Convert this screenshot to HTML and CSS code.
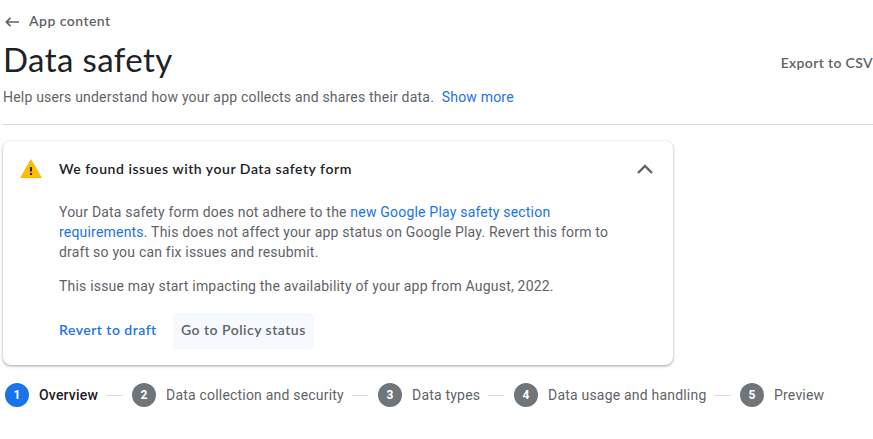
FILE: index.html
```html
<!DOCTYPE html>
<html lang="en">
<head>
<meta charset="utf-8">
<title>Data safety</title>
<link rel="stylesheet" href="styles.css">
</head>
<body>
<header class="page-header">
  <a class="back">
    <svg class="back-icon" width="14" height="10" viewBox="0 0 14 10"><path d="M14 5H1.400M5.500 .8L1.300 5l4.200 4.200" fill="none" stroke="#5f6368" stroke-width="1.700"/></svg>
    <span class="back-label">App content</span>
  </a>
  <div class="title-row">
    <h1 class="title">Data safety</h1>
    <span class="export">Export to CSV</span>
  </div>
  <p class="intro">Help users understand how your app collects and shares their data. <a class="link show-more">Show more</a></p>
</header>
<section class="card">
  <div class="card-head">
    <svg class="warning" width="22" height="19" viewBox="0 0 22 19"><path d="M0 19L11 0l11 19z" fill="#fbbc04"/><path d="M10 8h2v4.500h-2zM10 14h2v2h-2z" fill="#202124"/></svg>
    <h2 class="card-title">We found issues with your Data safety form</h2>
    <svg class="chevron" width="16" height="10" viewBox="0 0 16 10"><path d="M1 9l7-7 7 7" fill="none" stroke="#5f6368" stroke-width="2.300"/></svg>
  </div>
  <div class="card-body">
    <p class="text">Your Data safety form does not adhere to the <a class="link">new Google Play safety section<br>requirements</a>. This does not affect your app status on Google Play. Revert this form to<br>draft so you can fix issues and resubmit.</p>
    <p class="text">This issue may start impacting the availability of your app from August, 2022.</p>
    <div class="actions">
      <a class="action revert">Revert to draft</a>
      <a class="action policy">Go to Policy status</a>
    </div>
  </div>
</section>
<nav class="steps">
  <div class="step active"><span class="num">1</span><span class="name s1">Overview</span></div>
  <i class="line"></i>
  <div class="step"><span class="num">2</span><span class="name s2">Data collection and security</span></div>
  <i class="line"></i>
  <div class="step"><span class="num">3</span><span class="name s3">Data types</span></div>
  <i class="line"></i>
  <div class="step"><span class="num">4</span><span class="name s4">Data usage and handling</span></div>
  <i class="line"></i>
  <div class="step"><span class="num">5</span><span class="name s5">Preview</span></div>
</nav>
</body>
</html>
```
FILE: styles.css
```css
* { box-sizing: border-box; }
body {
  margin: 0;
  height: 439px;
  overflow: hidden;
  background: #fff;
  color: #5f6368;
  font: 400 14px/20px Roboto, sans-serif;
  letter-spacing: 0.2px;
}
h1, h2, p { margin: 0; }
svg { display: block; flex: none; }
.link { color: #1a73e8; }
.page-header {
  margin-left: 3px;
  height: 125px;
  padding-top: 11px;
  border-bottom: 1px solid #dadce0;
}
.back { display: flex; align-items: center; height: 20px; padding-left: 2px; }
.back-icon { margin-top: 2px; }
.back-label, .title, .export, .card-title, .action {
  font-family: Lato, sans-serif;
  font-size: 14px;
  white-space: nowrap;
}
.back-label { margin-left: 10px; font-weight: 600; letter-spacing: 0.45px; }
.title-row { display: flex; justify-content: space-between; height: 56px; }
.title {
  margin-top: 8px;
  font-size: 33px;
  font-weight: 400;
  line-height: 40px;
  letter-spacing: 0.4px;
  color: #202124;
}
.export { margin-top: 22px; font-weight: 600; letter-spacing: 0.35px; }
.intro { white-space: nowrap; }
.show-more { margin-left: 4px; }
.card {
  width: 670px;
  height: 224px;
  margin: 16px 0 0 3px;
  border-radius: 8px;
  box-shadow: 0 1px 2px rgba(60,64,67,.3), 0 1px 3px 1px rgba(60,64,67,.15);
}
.card-head { display: flex; align-items: center; height: 55px; padding: 0 20px 0 17px; }
.card-title { margin-left: 17px; font-weight: 600; letter-spacing: 0.54px; color: #202124; }
.chevron { margin-left: auto; }
.card-body { padding: 6px 0 0 56px; }
.text { margin-bottom: 14px; white-space: nowrap; }
.actions { display: flex; align-items: center; gap: 16px; margin-top: 17px; }
.action { height: 36px; font-weight: 600; line-height: 34px; letter-spacing: 0.48px; }
.revert { color: #1a73e8; width: 98px; }
.policy { width: 141px; padding-left: 8px; border-radius: 4px; background: #f6f9fe; }
.steps { display: flex; align-items: center; margin: 18px 0 0 5px; }
.step { display: flex; align-items: center; gap: 10px; }
.num {
  width: 24px;
  height: 24px;
  border-radius: 50%;
  background: #70757a;
  color: #fff;
  font-size: 12px;
  font-weight: 700;
  line-height: 24px;
  text-align: center;
}
.name { white-space: nowrap; }
.active .num { background: #1a73e8; }
.active .name { color: #202124; font-weight: 500; }
.line { width: 16px; height: 1px; margin: 0 10px 0 8px; background: #dadce0; }
.s1 { width: 59px; }
.s2 { width: 178px; }
.s3 { width: 68px; }
.s4 { width: 158px; }
```
